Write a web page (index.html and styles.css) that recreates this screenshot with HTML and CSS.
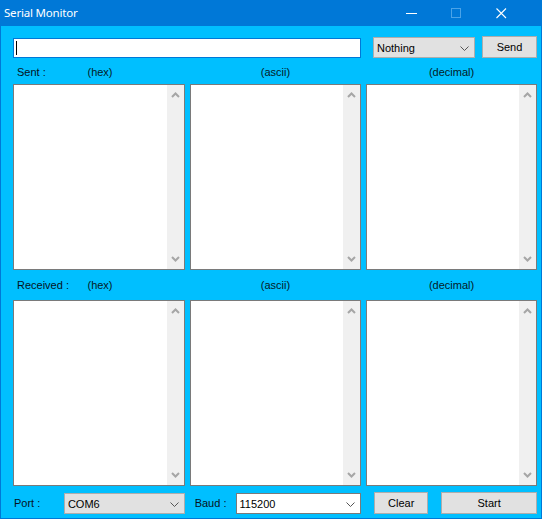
FILE: index.html
```html
<!DOCTYPE html>
<html>
<head>
<meta charset="utf-8">
<title>Serial Monitor</title>
<link rel="stylesheet" href="styles.css">
</head>
<body>
<div class="window">
  <div class="titlebar">
    <span class="title">Serial Monitor</span>
    <span class="tb-btn"><svg width="11" height="11" viewBox="0 0 11 11"><line x1="0" y1="5.5" x2="11" y2="5.5" stroke="#fff" stroke-width="1"/></svg></span>
    <span class="tb-btn"><svg width="11" height="11" viewBox="0 0 11 11"><rect x="0.5" y="0.5" width="9" height="9" fill="none" stroke="#4aa3e8" stroke-width="1"/></svg></span>
    <span class="tb-btn"><svg width="11" height="11" viewBox="0 0 11 11"><path d="M0.5 0.5 L10 10 M10 0.5 L0.5 10" stroke="#fff" stroke-width="1.1" fill="none"/></svg></span>
  </div>
  <div class="content">
    <div class="row-send">
      <div class="input"><span class="caret"></span></div>
      <div class="select grey w-nothing"><span>Nothing</span><svg class="chev" width="9" height="5" viewBox="0 0 9 5"><polyline points="0.5,0.5 4.5,4.5 8.5,0.5" fill="none" stroke="#555" stroke-width="1"/></svg></div>
      <div class="button w-send">Send</div>
    </div>
    <div class="labels">
      <div class="lab-first"><span class="cap">Sent :</span><span class="kind">(hex)</span><span></span></div>
      <div class="lab"><span class="kind">(ascii)</span></div>
      <div class="lab"><span class="kind">(decimal)</span></div>
    </div>
    <div class="panes">
      <div class="pane"><div class="area"></div><div class="scroll"><svg width="9" height="6" viewBox="0 0 9 6"><polyline points="1,5 4.5,1.5 8,5" fill="none" stroke="#a6a6a6" stroke-width="2"/></svg><svg width="9" height="6" viewBox="0 0 9 6"><polyline points="1,1 4.5,4.5 8,1" fill="none" stroke="#a6a6a6" stroke-width="2"/></svg></div></div>
      <div class="pane"><div class="area"></div><div class="scroll"><svg width="9" height="6" viewBox="0 0 9 6"><polyline points="1,5 4.5,1.5 8,5" fill="none" stroke="#a6a6a6" stroke-width="2"/></svg><svg width="9" height="6" viewBox="0 0 9 6"><polyline points="1,1 4.5,4.5 8,1" fill="none" stroke="#a6a6a6" stroke-width="2"/></svg></div></div>
      <div class="pane"><div class="area"></div><div class="scroll"><svg width="9" height="6" viewBox="0 0 9 6"><polyline points="1,5 4.5,1.5 8,5" fill="none" stroke="#a6a6a6" stroke-width="2"/></svg><svg width="9" height="6" viewBox="0 0 9 6"><polyline points="1,1 4.5,4.5 8,1" fill="none" stroke="#a6a6a6" stroke-width="2"/></svg></div></div>
    </div>
    <div class="labels labels-recv">
      <div class="lab-first"><span class="cap">Received :</span><span class="kind">(hex)</span><span></span></div>
      <div class="lab"><span class="kind">(ascii)</span></div>
      <div class="lab"><span class="kind">(decimal)</span></div>
    </div>
    <div class="panes">
      <div class="pane"><div class="area"></div><div class="scroll"><svg width="9" height="6" viewBox="0 0 9 6"><polyline points="1,5 4.5,1.5 8,5" fill="none" stroke="#a6a6a6" stroke-width="2"/></svg><svg width="9" height="6" viewBox="0 0 9 6"><polyline points="1,1 4.5,4.5 8,1" fill="none" stroke="#a6a6a6" stroke-width="2"/></svg></div></div>
      <div class="pane"><div class="area"></div><div class="scroll"><svg width="9" height="6" viewBox="0 0 9 6"><polyline points="1,5 4.5,1.5 8,5" fill="none" stroke="#a6a6a6" stroke-width="2"/></svg><svg width="9" height="6" viewBox="0 0 9 6"><polyline points="1,1 4.5,4.5 8,1" fill="none" stroke="#a6a6a6" stroke-width="2"/></svg></div></div>
      <div class="pane"><div class="area"></div><div class="scroll"><svg width="9" height="6" viewBox="0 0 9 6"><polyline points="1,5 4.5,1.5 8,5" fill="none" stroke="#a6a6a6" stroke-width="2"/></svg><svg width="9" height="6" viewBox="0 0 9 6"><polyline points="1,1 4.5,4.5 8,1" fill="none" stroke="#a6a6a6" stroke-width="2"/></svg></div></div>
    </div>
    <div class="row-bottom">
      <span class="cap w-port">Port :</span>
      <div class="select grey w-com"><span>COM6</span><svg class="chev" width="9" height="5" viewBox="0 0 9 5"><polyline points="0.5,0.5 4.5,4.5 8.5,0.5" fill="none" stroke="#555" stroke-width="1"/></svg></div>
      <span class="cap w-baud">Baud :</span>
      <div class="select white w-baudsel"><span>115200</span><svg class="chev" width="9" height="5" viewBox="0 0 9 5"><polyline points="0.5,0.5 4.5,4.5 8.5,0.5" fill="none" stroke="#555" stroke-width="1"/></svg></div>
      <div class="button w-clear">Clear</div>
      <div class="button w-start">Start</div>
    </div>
  </div>
</div>
</body>
</html>
```

FILE: styles.css
```css
* { box-sizing: border-box; }
html, body { margin: 0; padding: 0; }
body { background: #00bfff; font-family: "Liberation Sans", Arial, sans-serif; font-size: 11px; color: #000; }

.window {
  width: 542px;
  height: 519px;
  border: 1px solid #0078d7;
  border-top: 0;
  background: #00bfff;
  display: flex;
  flex-direction: column;
  overflow: hidden;
}

.titlebar {
  height: 26px;
  margin: 0 -1px;
  background: #0078d7;
  display: flex;
  align-items: center;
  color: #fff;
  flex: none;
}
.title {
  flex: 1;
  padding-left: 4px;
  font-family: "Noto Sans", "DejaVu Sans", sans-serif;
  font-size: 11.5px;
  letter-spacing: -0.2px;
  padding-bottom: 1px;
}
.tb-btn {
  width: 45px;
  height: 26px;
  display: flex;
  align-items: center;
  justify-content: center;
}
.tb-btn:last-child { margin-right: 18px; }

.content {
  flex: 1;
  padding: 10px 4px 0 12px;
  display: flex;
  flex-direction: column;
}

.row-send {
  height: 22px;
  display: flex;
  align-items: center;
}
.input {
  width: 348px;
  height: 20px;
  margin-top: 2px;
  background: #fff;
  border: 1px solid #0078d7;
  display: flex;
  align-items: center;
  padding-left: 2px;
}
.caret { width: 1px; height: 14px; background: #000; }

.select {
  height: 21px;
  display: flex;
  align-items: center;
  justify-content: space-between;
  padding: 0 5px 0 3px;
}
.select .chev { margin-top: 1px; }
.grey { background: #e1e1e1; border: 1px solid #adadad; }
.white { background: #fff; border: 1px solid #7a7a7a; }
.w-nothing { width: 102px; margin-left: 12px; margin-top: 1px; }

.button {
  height: 22px;
  background: #e1e1e1;
  border: 1px solid #adadad;
  display: flex;
  align-items: center;
  justify-content: center;
  padding-bottom: 1px;
}
.w-send { width: 55px; margin-left: 7px; }

.labels {
  height: 26px;
  display: grid;
  grid-template-columns: 172px 171px 171px;
  column-gap: 5px;
  align-items: center;
  padding-top: 1px;
}
.labels-recv { height: 30px; padding-top: 0; }
.lab-first {
  display: grid;
  grid-template-columns: 1fr auto 1fr;
}
.lab-first .cap { padding-left: 4px; }
.lab { text-align: center; }
.cap { color: #06121c; }
.kind { color: #04201f; }
.lab-first .kind { padding-left: 2px; }

.panes {
  height: 186px;
  display: grid;
  grid-template-columns: 172px 171px 171px;
  column-gap: 5px;
}
.pane {
  border: 1px solid #7a7a7a;
  background: #fff;
  display: flex;
}
.area { flex: 1; }
.scroll {
  width: 17px;
  background: #f0f0f0;
  display: flex;
  flex-direction: column;
  justify-content: space-between;
  align-items: center;
  padding: 7px 0 7px;
}

.row-bottom {
  margin-top: 6px;
  height: 22px;
  display: flex;
  align-items: center;
}
.w-port { width: 51px; padding-left: 1px; }
.w-com { width: 121px; margin-top: 1px; }
.w-baud { width: 41px; margin-left: 10px; }
.w-baudsel { width: 126px; margin-top: 1px; }
.w-clear { width: 54px; margin-left: 13px; }
.w-start { width: 96px; margin-left: 13px; }
```
